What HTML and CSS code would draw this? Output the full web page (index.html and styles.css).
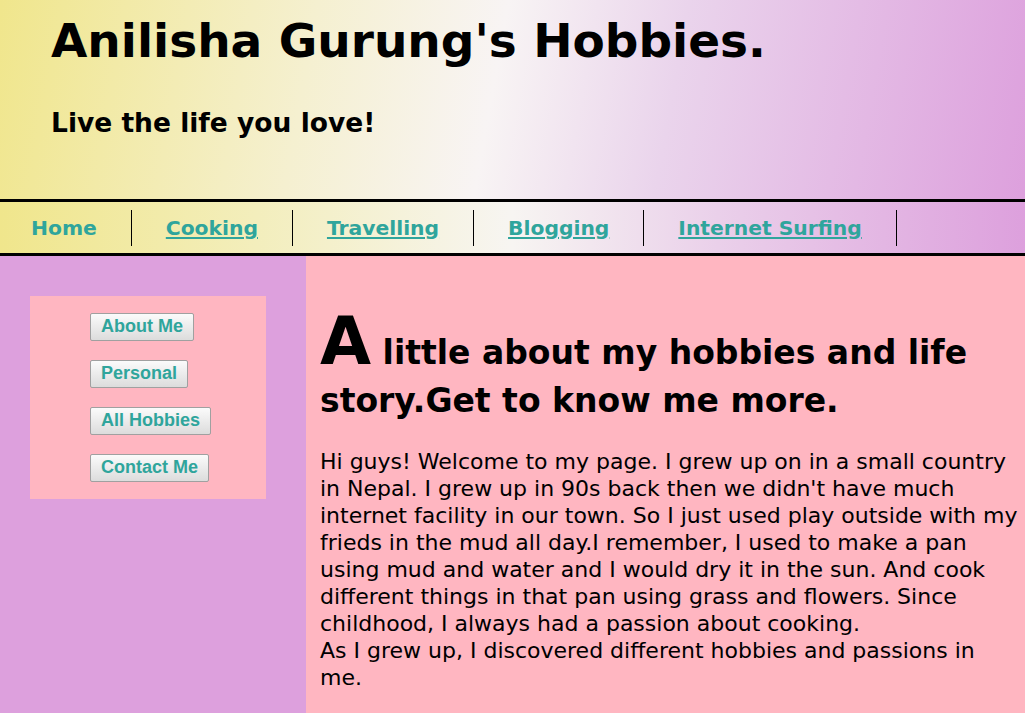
FILE: index.html
```html
<!DOCTYPE html>
<html lang="en">
<head>
<meta charset="utf-8">
<title>Anilisha Gurung's Hobbies</title>
<link rel="stylesheet" href="styles.css">
</head>
<body>
<header class="site-header">
  <h1 class="title">Anilisha Gurung's Hobbies.</h1>
  <h2 class="tagline">Live the life you love!</h2>
</header>
<nav class="topnav">
  <ul class="nav-list">
    <li class="nav-item"><a class="nav-link current" href="#">Home</a></li>
    <li class="nav-item"><a class="nav-link" href="#">Cooking</a></li>
    <li class="nav-item"><a class="nav-link" href="#">Travelling</a></li>
    <li class="nav-item"><a class="nav-link" href="#">Blogging</a></li>
    <li class="nav-item"><a class="nav-link" href="#">Internet Surfing</a></li>
  </ul>
</nav>
<div class="layout">
  <aside class="sidebar">
    <div class="side-box">
      <button class="side-btn">About Me</button>
      <button class="side-btn">Personal</button>
      <button class="side-btn">All Hobbies</button>
      <button class="side-btn">Contact Me</button>
    </div>
  </aside>
  <main class="content">
    <h2 class="intro-title"><span class="big-a">A</span> little about my hobbies and life story.Get to know me more.</h2>
    <p class="story">Hi guys! Welcome to my page. I grew up on in a small country in Nepal. I grew up in 90s back then we didn't have much internet facility in our town. So I just used play outside with my frieds in the mud all day.I remember, I used to make a pan using mud and water and I would dry it in the sun. And cook different things in that pan using grass and flowers. Since childhood, I always had a passion about cooking.<br>As I grew up, I discovered different hobbies and passions in me.</p>
  </main>
</div>
</body>
</html>
```

FILE: styles.css
```css
* { box-sizing: border-box; }
html, body { margin: 0; padding: 0; }
body {
  font-family: "DejaVu Sans", Verdana, sans-serif;
  background: #ffb6c1;
  color: #000;
  min-height: 713px;
}
.site-header {
  height: 199px;
  padding: 12px 0 0 51px;
  background: linear-gradient(100deg, #f0e68c 0%, #f5f0d0 30%, #f8f4f4 48%, #ead4ec 65%, #dda0dd 100%);
}
.title {
  margin: 0;
  font-size: 47px;
  line-height: 58px;
  font-weight: bold;
}
.tagline {
  margin: 36px 0 0;
  font-size: 26.5px;
  line-height: 33px;
  font-weight: bold;
}
.topnav {
  border-top: 3px solid #000;
  border-bottom: 3px solid #000;
  background: linear-gradient(to right, #f0e68c 0%, #f3eebc 25%, #f7f5f2 50%, #ead0ea 70%, #dda0dd 100%);
}
.nav-list {
  list-style: none;
  margin: 0;
  padding: 0;
  display: flex;
  height: 51px;
  align-items: center;
}
.nav-item {
  border-right: 1px solid #000;
  height: 36px;
  display: flex;
  align-items: center;
  padding: 0 34px;
}
.nav-item:first-child { padding-left: 31px; }
.nav-link {
  color: #2fa59c;
  font-weight: bold;
  font-size: 20.3px;
  text-decoration: underline;
}
.nav-link.current { text-decoration: none; }
.layout {
  display: flex;
  min-height: 457px;
}
.sidebar {
  width: 306px;
  flex: none;
  background: #dda0dd;
  padding: 40px 40px 0 30px;
}
.side-box {
  background: #ffb6c1;
  height: 203px;
  padding: 17px 0 0 60px;
  display: flex;
  flex-direction: column;
  align-items: flex-start;
  gap: 19px;
}
.side-btn {
  font-family: "Liberation Sans", Arial, sans-serif;
  font-weight: bold;
  font-size: 18px;
  color: #2fa59c;
  height: 28px;
  padding: 0 10px 1px;
  border: 1px solid #a0a0a0;
  border-radius: 2px;
  background: linear-gradient(#fbfbfb, #dcdcdc);
}
.content {
  flex: 1;
  padding: 0 5px 0 14px;
}
.intro-title {
  margin: 66px 0 0;
  font-size: 33px;
  line-height: 48px;
  font-weight: bold;
}
.big-a {
  font-size: 66px;
  line-height: 40px;
}
.story {
  margin: 23px 0 0;
  font-size: 22px;
  line-height: 27px;
}
```
